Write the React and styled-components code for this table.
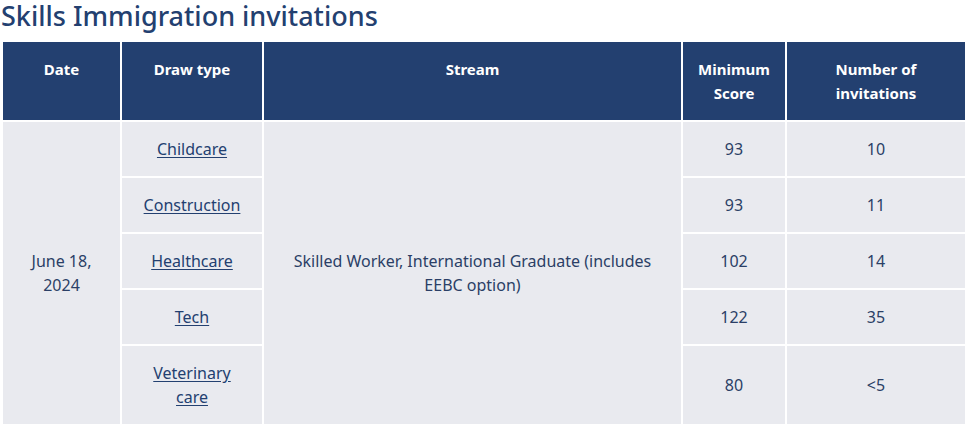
import * as React from "react";
import styled, { createGlobalStyle } from "styled-components";

const colors = {
  navy: "#234070",
  text: "#2b3f66",
  cell: "#e9eaef",
  white: "#ffffff",
};

const GlobalStyle = createGlobalStyle`
  html, body {
    margin: 0;
    padding: 0;
    background: ${colors.white};
  }
  body {
    font-family: "Noto Sans", "Open Sans", sans-serif;
    color: ${colors.text};
  }
`;

const Page = styled.div`
  padding: 0 1px;
  overflow: hidden;
  height: 424px;
`;

const Title = styled.h2`
  margin: 0 0 8px;
  font-size: 27px;
  line-height: 32px;
  font-weight: 500;
  color: ${colors.navy};
`;

const Table = styled.table`
  width: 966px;
  table-layout: fixed;
  border-collapse: separate;
  border-spacing: 2px;
  line-height: 24px;
`;

const Th = styled.th`
  background: ${colors.navy};
  color: ${colors.white};
  font-size: 15px;
  font-weight: 700;
  text-align: center;
  vertical-align: top;
  padding: 15px 12px;
`;

const Td = styled.td`
  background: ${colors.cell};
  color: ${colors.text};
  font-size: 16px;
  text-align: center;
  vertical-align: middle;
  padding: 15px ${({ $wide }) => ($wide ? 16 : 14)}px;
`;

const DrawLink = styled.a`
  color: ${colors.navy};
  text-decoration: underline;
  text-underline-offset: 2px;
`;

const draws = [
  { type: "Childcare", score: 93, count: "10" },
  { type: "Construction", score: 93, count: "11" },
  { type: "Healthcare", score: 102, count: "14" },
  { type: "Tech", score: 122, count: "35" },
  { type: "Veterinary care", score: 80, count: "<5" },
];

export default function App() {
  return (
    <Page>
      <GlobalStyle />
      <Title>Skills Immigration invitations</Title>
      <Table>
        <colgroup>
          <col style={{ width: 117 }} />
          <col style={{ width: 140 }} />
          <col style={{ width: 417 }} />
          <col style={{ width: 102 }} />
          <col style={{ width: 178 }} />
        </colgroup>
        <thead>
          <tr>
            <Th>Date</Th>
            <Th>Draw type</Th>
            <Th>Stream</Th>
            <Th>Minimum Score</Th>
            <Th>Number of invitations</Th>
          </tr>
        </thead>
        <tbody>
          {draws.map((d, i) => (
            <tr key={d.type}>
              {i === 0 && <Td rowSpan={draws.length}>June 18, 2024</Td>}
              <Td>
                <DrawLink href="#">{d.type}</DrawLink>
              </Td>
              {i === 0 && (
                <Td rowSpan={draws.length} $wide>
                  Skilled Worker, International Graduate (includes EEBC option)
                </Td>
              )}
              <Td>{d.score}</Td>
              <Td>{d.count}</Td>
            </tr>
          ))}
        </tbody>
      </Table>
    </Page>
  );
}
